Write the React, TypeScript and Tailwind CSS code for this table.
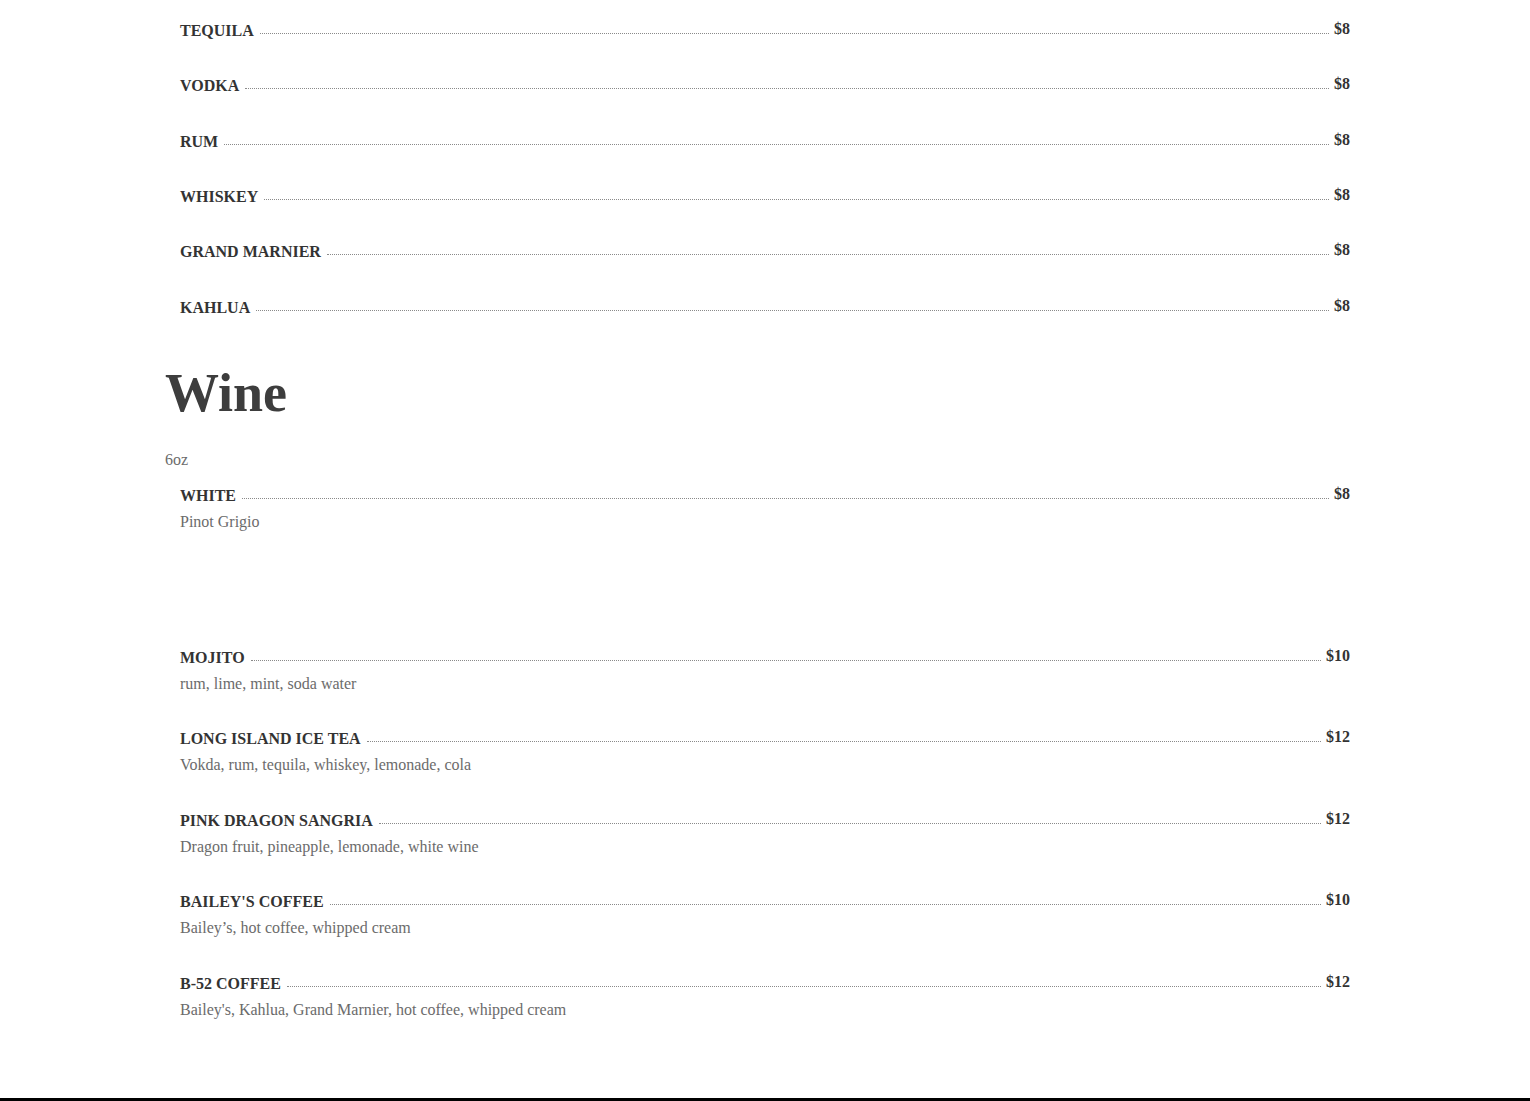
type MenuItem = {
  name: string;
  price: string;
  description?: string;
};

const spirits: MenuItem[] = [
  { name: "TEQUILA", price: "$8" },
  { name: "VODKA", price: "$8" },
  { name: "RUM", price: "$8" },
  { name: "WHISKEY", price: "$8" },
  { name: "GRAND MARNIER", price: "$8" },
  { name: "KAHLUA", price: "$8" },
];

const wine: MenuItem[] = [
  { name: "WHITE", price: "$8", description: "Pinot Grigio" },
];

const cocktails: MenuItem[] = [
  { name: "MOJITO", price: "$10", description: "rum, lime, mint, soda water" },
  {
    name: "LONG ISLAND ICE TEA",
    price: "$12",
    description: "Vokda, rum, tequila, whiskey, lemonade, cola",
  },
  {
    name: "PINK DRAGON SANGRIA",
    price: "$12",
    description: "Dragon fruit, pineapple, lemonade, white wine",
  },
  {
    name: "BAILEY'S COFFEE",
    price: "$10",
    description: "Bailey\u2019s, hot coffee, whipped cream",
  },
  {
    name: "B-52 COFFEE",
    price: "$12",
    description: "Bailey's, Kahlua, Grand Marnier, hot coffee, whipped cream",
  },
];

function MenuRow({ item }: { item: MenuItem }) {
  return (
    <li className="px-[15px]">
      <div className="flex items-end text-[16px] leading-6 font-bold text-[#333]">
        <span>{item.name}</span>
        <span className="flex-1 ml-[6px] mr-[5px] mb-[9px] border-b border-dotted border-[#8a8a8a]" />
        <span className="-translate-y-[2px]">{item.price}</span>
      </div>
      {item.description && (
        <p className="mt-[2px] text-[16px] leading-6 text-[#6b6b6b]">
          {item.description}
        </p>
      )}
    </li>
  );
}

export default function App() {
  return (
    <div className="min-h-screen bg-white font-['Liberation_Serif','Times_New_Roman',serif]">
      <main className="mx-auto w-[1200px] pt-[18.8px]">
        <ul role="list" className="flex flex-col gap-[31.4px]">
          {spirits.map((item) => (
            <MenuRow item={item} key={item.name} />
          ))}
        </ul>

        <h2 className="mt-[43.4px] text-[54px] leading-[60px] font-bold text-[#3d3d3d]">
          Wine
        </h2>
        <p className="mt-[24.8px] text-[16px] leading-6 text-[#6b6b6b]">6oz</p>
        <ul role="list" className="mt-[12px] flex flex-col">
          {wine.map((item) => (
            <MenuRow item={item} key={item.name} />
          ))}
        </ul>

        <ul role="list" className="mt-[112px] flex flex-col gap-[31.4px]">
          {cocktails.map((item) => (
            <MenuRow item={item} key={item.name} />
          ))}
        </ul>
      </main>
      <footer className="mt-[76px] h-[60px] bg-black" />
    </div>
  );
}
